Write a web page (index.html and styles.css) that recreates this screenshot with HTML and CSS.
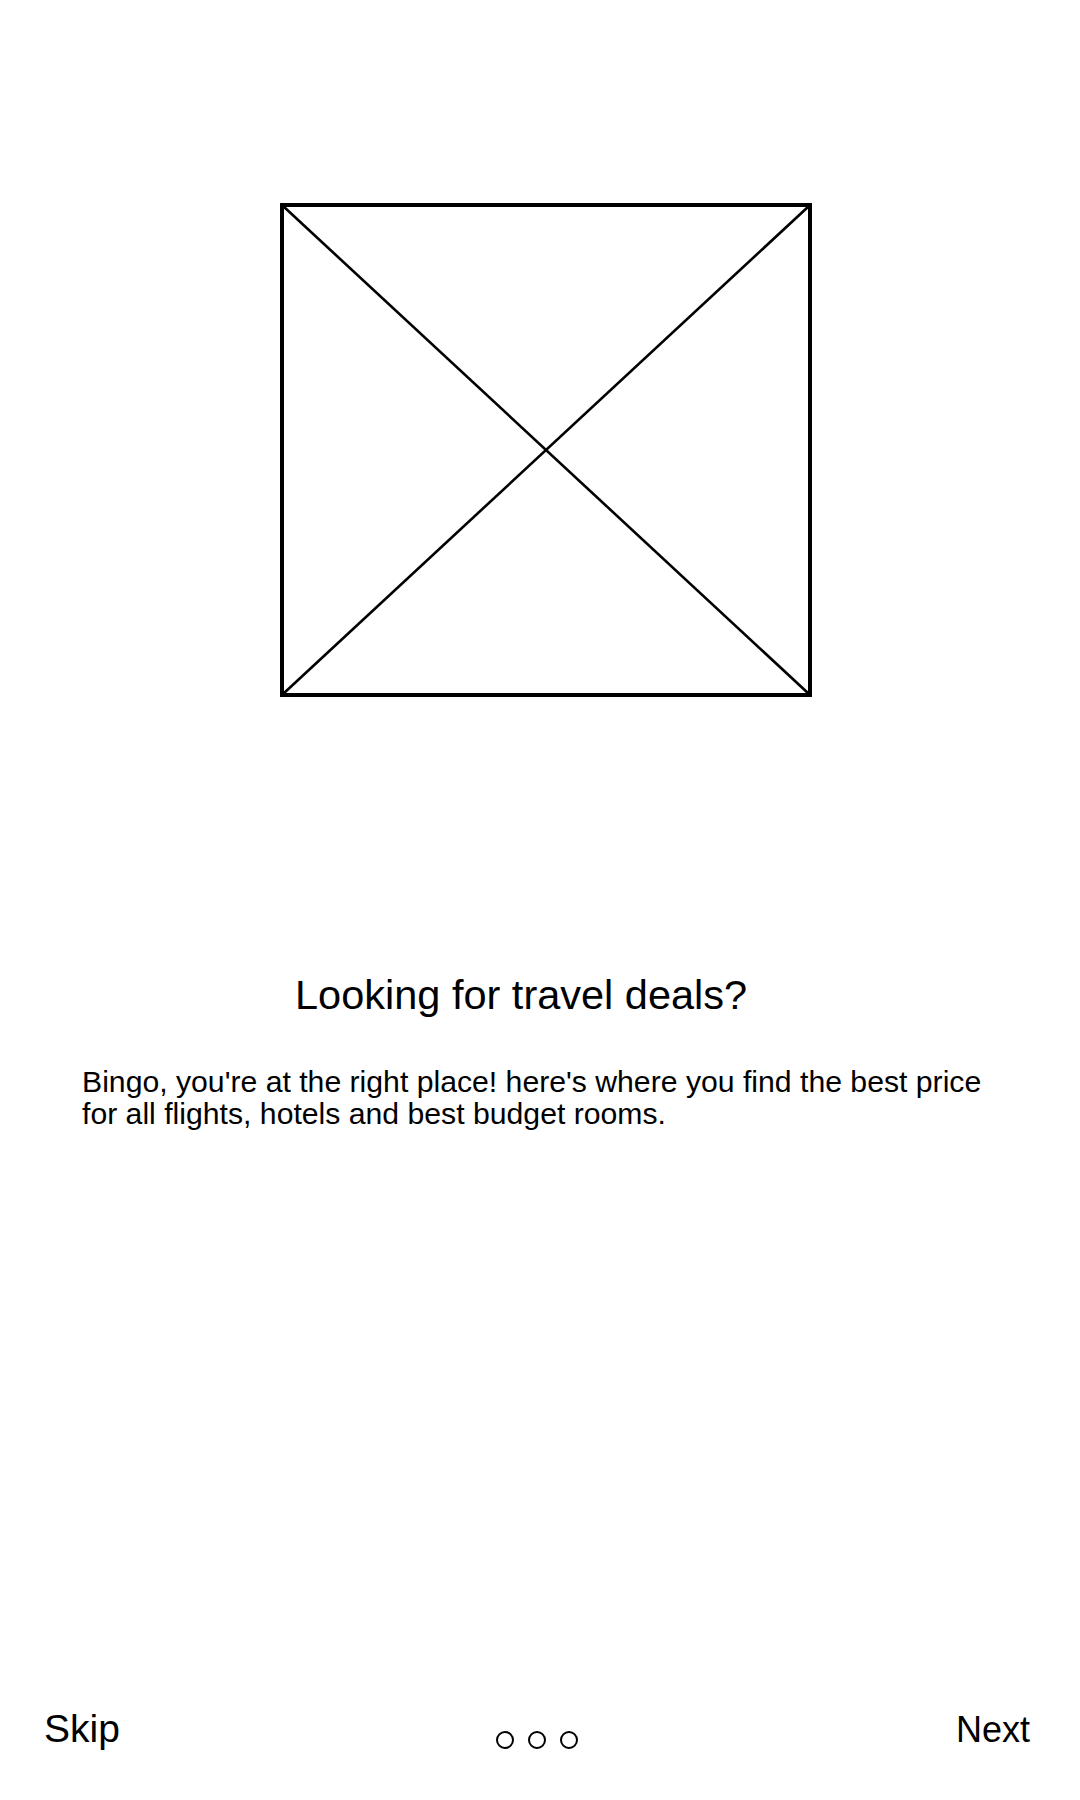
FILE: index.html
```html
<!DOCTYPE html>
<html lang="en">
<head>
<meta charset="utf-8">
<title>Onboarding</title>
<link rel="stylesheet" href="styles.css">
</head>
<body>
<div class="page">
  <div class="hero">
    <svg width="532" height="494" viewBox="0 0 532 494">
      <rect x="2" y="2" width="528" height="490" fill="none" stroke="#000" stroke-width="4"/>
      <line x1="3" y1="3" x2="529" y2="491" stroke="#000" stroke-width="2.6"/>
      <line x1="529" y1="3" x2="3" y2="491" stroke="#000" stroke-width="2.6"/>
    </svg>
  </div>
  <h1 class="title">Looking for travel deals?</h1>
  <p class="desc">Bingo, you're at the right place! here's where you find the best price for all flights, hotels and best budget rooms.</p>
  <div class="footer">
    <span class="skip">Skip</span>
    <div class="dots"><span class="dot"></span><span class="dot"></span><span class="dot"></span></div>
    <span class="next">Next</span>
  </div>
</div>
</body>
</html>
```

FILE: styles.css
```css
html, body {
  margin: 0;
  padding: 0;
  background: #fff;
}
.page {
  width: 1080px;
  height: 1800px;
  display: flex;
  flex-direction: column;
  font-family: "Liberation Sans", Arial, sans-serif;
  color: #000;
}
.hero {
  margin: 203px 0 0 280px;
  width: 532px;
  height: 494px;
}
.hero svg {
  display: block;
}
.title {
  margin: 274px 0 0 295px;
  font-size: 41.5px;
  line-height: 47px;
  font-weight: normal;
}
.desc {
  margin: 48px 0 0 82px;
  width: 915px;
  font-size: 30.2px;
  line-height: 32px;
}
.footer {
  margin-top: auto;
  padding: 0 50px 47px 44px;
  display: grid;
  grid-template-columns: 1fr auto 1fr;
  align-items: start;
}
.skip {
  font-size: 39px;
  line-height: 46px;
  justify-self: start;
  padding-top: 3px;
}
.next {
  font-size: 36px;
  line-height: 46px;
  justify-self: end;
  padding-top: 4px;
}
.dots {
  display: flex;
  gap: 14px;
  align-self: end;
  margin-bottom: 4px;
}
.dot {
  width: 14px;
  height: 14px;
  border: 2.3px solid #000;
  border-radius: 50%;
}
```
